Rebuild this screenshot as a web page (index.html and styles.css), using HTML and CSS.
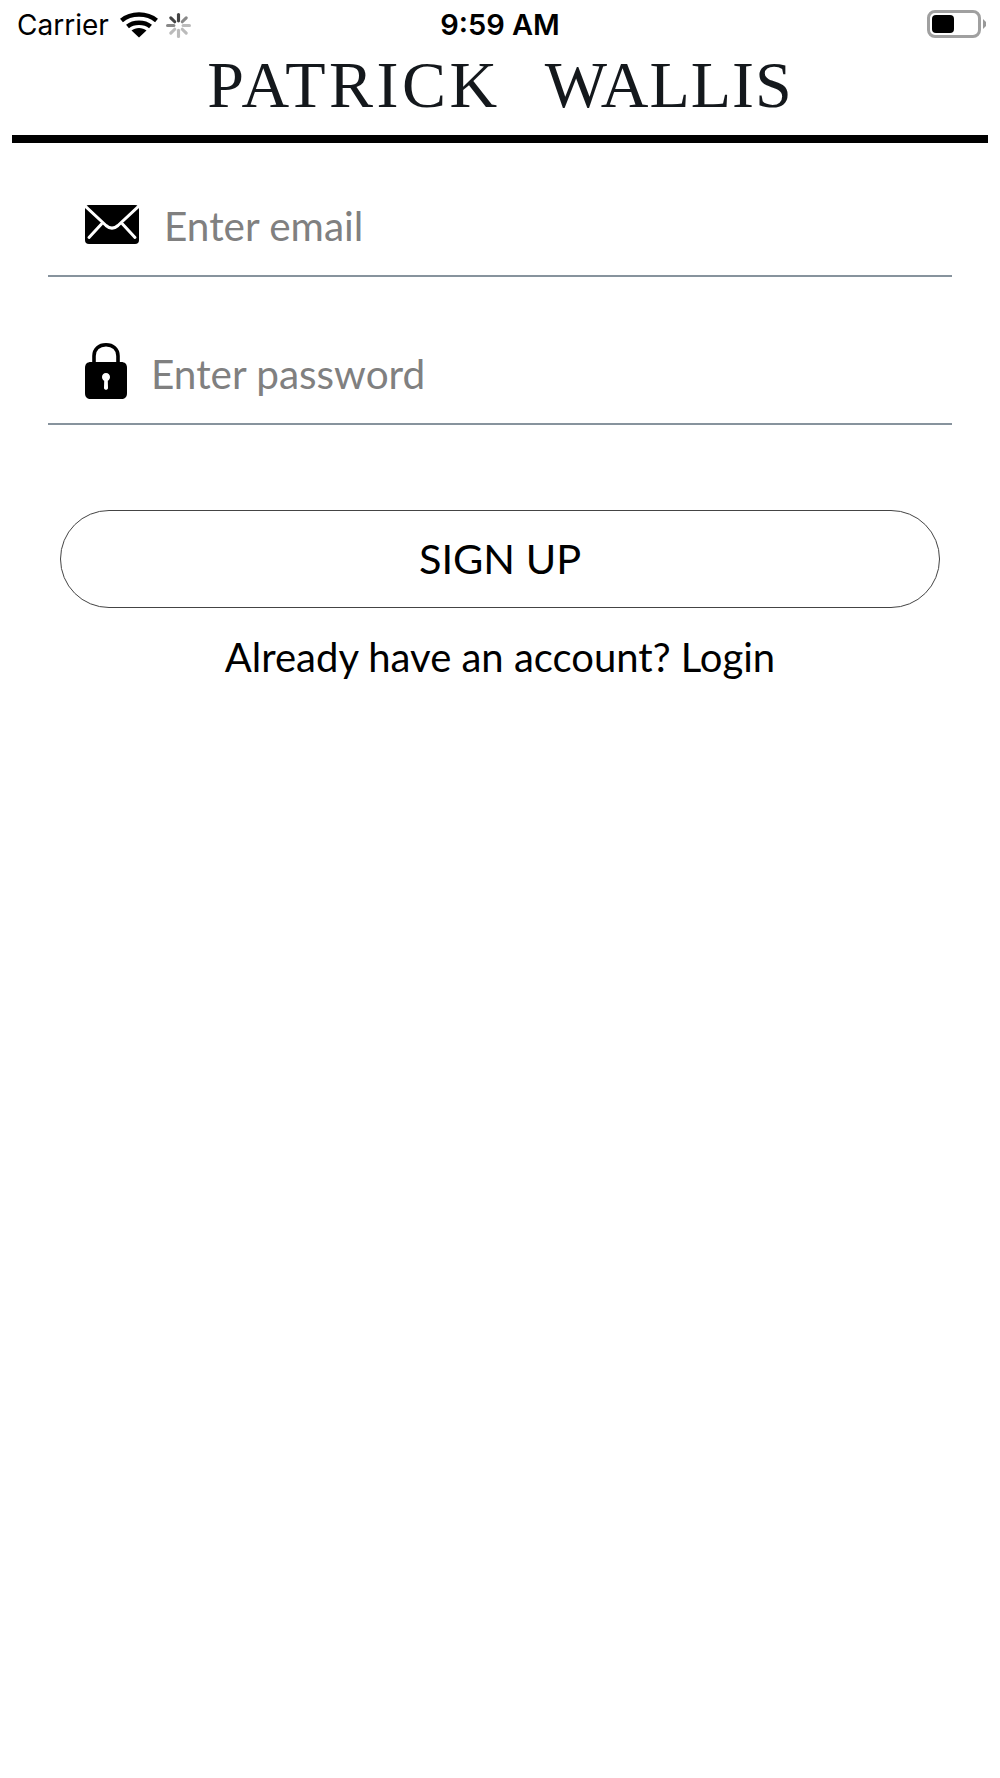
FILE: index.html
```html
<!DOCTYPE html>
<html lang="en">
<head>
<meta charset="utf-8">
<title>Patrick Wallis</title>
<link rel="stylesheet" href="styles.css">
</head>
<body>
<div class="status">
  <div class="status-left">
    <span class="carrier">Carrier</span>
    <svg class="wifi" viewBox="0 0 38 26" aria-hidden="true">
      <path d="M1.500 8.500C11 .5 27 .5 36.500 8.500" class="arc"/>
      <path d="M7.500 14.500C13.500 9.500 24.500 9.500 30.500 14.500" class="arc"/>
      <path d="M19 25.500L11.500 18.500C15.500 15 22.500 15 26.500 18.500Z"/>
    </svg>
    <svg class="spin" viewBox="0 0 24 24" aria-hidden="true">
      <path d="M12 1.500v6" class="s1"/><path d="M19.400 4.600l-3.800 3.800" class="s2"/>
      <path d="M22.500 12h-6" class="s3"/><path d="M19.400 19.400l-3.800-3.800" class="s3"/>
      <path d="M12 22.500v-6" class="s3"/><path d="M4.600 19.400l3.800-3.800" class="s3"/>
      <path d="M1.500 12h6" class="s2"/><path d="M4.600 4.600l3.800 3.800" class="s1"/>
    </svg>
  </div>
  <span class="time">9:59 AM</span>
  <div class="status-right">
    <div class="battery"><div class="charge"></div></div>
    <svg class="cap" viewBox="0 0 3 10" aria-hidden="true"><path d="M0 0L3 3V7L0 10Z"/></svg>
  </div>
</div>

<h1 class="title"><span class="first">PATRICK</span><span class="last">WALLIS</span></h1>
<div class="rule"></div>

<form class="form">
  <label class="field field-mail">
    <svg class="icon-mail" viewBox="0 0 54 39" aria-hidden="true">
      <rect width="54" height="39" rx="4"/>
      <path class="cut" d="M-1 0L21 20.500C25 24 29 24 33 20.500L55 0"/>
      <path class="cut cut-round" d="M16.500 19L4 32.500M37.500 19L50 32.500"/>
    </svg>
    <span class="placeholder">Enter email</span>
  </label>
  <label class="field field-pass">
    <svg class="icon-lock" viewBox="0 0 42 56" aria-hidden="true">
      <path d="M9 19V13C9 6 14 1.800 21 1.800S33 6 33 13V19" class="shackle"/>
      <path fill-rule="evenodd" d="M6 19H36C40 19 42 21 42 25V50C42 54 40 56 36 56H6C2 56 0 54 0 50V25C0 21 2 19 6 19ZM21 30C18.500 30 17 32 17 34C17 36 18 37 19.200 37.800L19 45C19 46 20 46.800 21 46.800S23 46 23 45L22.800 37.800C24 37 25 36 25 34C25 32 23.500 30 21 30Z"/>
    </svg>
    <span class="placeholder">Enter password</span>
  </label>
  <button class="signup" type="button">SIGN UP</button>
  <p class="login">Already have an account? Login</p>
</form>
</body>
</html>
```
FILE: styles.css
```css
* { box-sizing: border-box; }
html, body { margin: 0; background: #fff; }
body { height: 1778px; overflow: hidden; color: #000; font-family: Lato, "Liberation Sans", sans-serif; }

.status {
  display: grid;
  grid-template-columns: minmax(0, 1fr) auto minmax(0, 1fr);
  align-items: center;
  height: 50px;
  padding: 0 14px;
}
.status-left { display: flex; align-items: center; margin-left: 3px; }
.carrier { font: 400 28px/50px Inter, "Liberation Sans", sans-serif; }
.time { font: 600 29px/50px Inter, "Liberation Sans", sans-serif; }
.wifi { width: 38px; height: 26px; margin-left: 11px; margin-top: -1px; }
.arc { fill: none; stroke: #000; stroke-width: 4.500; }
.spin { width: 25px; height: 25px; margin-left: 8px; }
.spin path { fill: none; stroke-width: 3; stroke-linecap: round; }
.s1 { stroke: #444; }
.s2 { stroke: #888; }
.s3 { stroke: #bbb; }
.status-right { display: flex; align-items: center; justify-content: flex-end; gap: 2px; margin-bottom: 2px; }
.battery {
  width: 54px;
  height: 28px;
  padding: 2px;
  border: 3px solid #a0a0a0;
  border-radius: 8px;
}
.charge { width: 22px; height: 18px; background: #000; border-radius: 4px; }
.cap { width: 3px; height: 10px; fill: #999; }

.title {
  display: flex;
  justify-content: center;
  gap: 44px;
  margin: 0;
  height: 85px;
  font: 400 66px/69px "Liberation Serif", serif;
  color: #14181c;
  white-space: nowrap;
}
.first { letter-spacing: 3.500px; }
.last { letter-spacing: 1px; }
.rule { height: 8px; margin: 0 12px; background: #000; }

.form { display: flex; flex-direction: column; padding: 0 48px; }
.field {
  display: flex;
  align-items: center;
  padding-left: 37px;
  border-bottom: 2px solid #87939d;
}
.field-mail { height: 134px; padding-top: 33px; gap: 25px; }
.field-pass { height: 148px; padding-top: 47px; gap: 24px; }
.placeholder { font-size: 40.500px; line-height: 50px; color: #808080; }
.icon-mail { width: 54px; height: 39px; margin-top: -3px; }
.icon-lock { width: 42px; height: 56px; margin-top: -5px; }
.cut { fill: none; stroke: #fff; stroke-width: 3; }
.cut-round { stroke-linecap: round; }
.shackle { fill: none; stroke: #000; stroke-width: 3.600; }

.signup {
  display: block;
  height: 98px;
  margin: 85px 12px 0;
  background: #fff;
  border: 1px solid #444;
  border-radius: 49px;
  font: 400 41.500px/1 Lato, "Liberation Sans", sans-serif;
  color: #000;
}
.login {
  margin: 21px 0 0;
  text-align: center;
  font-size: 40px;
  line-height: 56px;
}
```
